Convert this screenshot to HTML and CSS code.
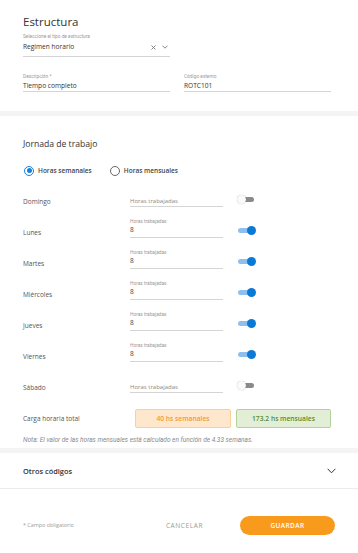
FILE: index.html
```html
<!DOCTYPE html>
<html lang="es">
<head>
    <meta charset="UTF-8">
    <meta name="viewport" content="width=device-width, initial-scale=1.0">
    <title>Estructura</title>
    <link rel="stylesheet" href="styles.css">
</head>
<body>

<div class="section estructura">
    <h1 class="title">Estructura</h1>

    <div class="field select-field">
        <span class="field-label">Seleccione el tipo de estructura</span>
        <div class="field-value select-value">
            <span>Regimen horario</span>
            <span class="select-icons">
                <svg width="5" height="5" viewBox="0 0 5 5"><path d="M0.5 0.5L4.5 4.5M4.5 0.5L0.5 4.5" stroke="#777" stroke-width="0.9" fill="none"/></svg>
                <svg width="6" height="4" viewBox="0 0 6 4"><path d="M0.5 0.7L3 3.2L5.5 0.7" stroke="#777" stroke-width="0.9" fill="none"/></svg>
            </span>
        </div>
    </div>

    <div class="field-row">
        <div class="field">
            <span class="field-label">Descripción *</span>
            <div class="field-value">Tiempo completo</div>
        </div>
        <div class="field">
            <span class="field-label">Código externo</span>
            <div class="field-value">ROTC101</div>
        </div>
    </div>
</div>

<div class="band"></div>

<div class="section jornada">
    <h2 class="subtitle">Jornada de trabajo</h2>

    <div class="radios">
        <label class="radio checked"><span class="radio-circle"></span>Horas semanales</label>
        <label class="radio"><span class="radio-circle"></span>Horas mensuales</label>
    </div>

    <div class="day-list">
        <div class="day-row">
            <span class="day-name">Domingo</span>
            <div class="field hours is-empty">
                <span class="field-label"></span>
                <div class="field-value">Horas trabajadas</div>
            </div>
            <span class="toggle"></span>
        </div>
        <div class="day-row">
            <span class="day-name">Lunes</span>
            <div class="field hours">
                <span class="field-label">Horas trabajadas</span>
                <div class="field-value">8</div>
            </div>
            <span class="toggle on"></span>
        </div>
        <div class="day-row">
            <span class="day-name">Martes</span>
            <div class="field hours">
                <span class="field-label">Horas trabajadas</span>
                <div class="field-value">8</div>
            </div>
            <span class="toggle on"></span>
        </div>
        <div class="day-row">
            <span class="day-name">Miércoles</span>
            <div class="field hours">
                <span class="field-label">Horas trabajadas</span>
                <div class="field-value">8</div>
            </div>
            <span class="toggle on"></span>
        </div>
        <div class="day-row">
            <span class="day-name">Jueves</span>
            <div class="field hours">
                <span class="field-label">Horas trabajadas</span>
                <div class="field-value">8</div>
            </div>
            <span class="toggle on"></span>
        </div>
        <div class="day-row">
            <span class="day-name">Viernes</span>
            <div class="field hours">
                <span class="field-label">Horas trabajadas</span>
                <div class="field-value">8</div>
            </div>
            <span class="toggle on"></span>
        </div>
        <div class="day-row">
            <span class="day-name">Sábado</span>
            <div class="field hours is-empty">
                <span class="field-label"></span>
                <div class="field-value">Horas trabajadas</div>
            </div>
            <span class="toggle"></span>
        </div>
    </div>

    <div class="total-row">
        <span class="day-name">Carga horaria total</span>
        <span class="total-box weekly">40 hs semanales</span>
        <span class="total-box monthly">173.2 hs mensuales</span>
    </div>

    <p class="note">Nota: El valor de las horas mensuales está calculado en función de 4.33 semanas.</p>
</div>

<div class="band"></div>

<div class="accordion">
    <span class="accordion-title">Otros códigos</span>
    <svg width="9" height="6" viewBox="0 0 9 6"><path d="M0.6 0.8L4.5 4.8L8.4 0.8" stroke="#333" stroke-width="1" fill="none"/></svg>
</div>

<div class="footer">
    <span class="required">* Campo obligatorio</span>
    <div class="actions">
        <button class="btn-cancel">CANCELAR</button>
        <button class="btn-save">GUARDAR</button>
    </div>
</div>

</body>
</html>
```

FILE: styles.css
```css
body {
    margin: 0;
    padding: 0;
    background-color: #fff;
    font-family: "Open Sans", "Liberation Sans", sans-serif;
    color: #333;
}
.section {
    padding: 0 27px 0 23px;
}
.estructura {
    padding-top: 14px;
    padding-bottom: 19px;
}
.title {
    margin: 0 0 4px;
    font-size: 11.5px;
    line-height: 16px;
    font-weight: 400;
    color: #333;
}
.field {
    display: flex;
    flex-direction: column;
    border-bottom: 1px solid #d4d4d4;
}
.field-label {
    font-family: Roboto, "Liberation Sans", sans-serif;
    font-size: 4.8px;
    line-height: 6px;
    height: 6px;
    color: #9a9a9a;
}
.field-value {
    font-size: 6.6px;
    line-height: 10px;
    color: #333;
}
.select-field {
    width: 147px;
    padding-bottom: 4px;
}
.select-value {
    margin-top: 2px;
    display: flex;
    justify-content: space-between;
    align-items: center;
}
.select-icons {
    display: flex;
    align-items: center;
    gap: 6px;
    padding-right: 2px;
}
.field-row {
    display: grid;
    grid-template-columns: 147px 147px;
    column-gap: 14px;
    margin-top: 17px;
}
.field-row .field-value {
    margin-top: 1px;
}
.band {
    height: 5px;
    background-color: #f4f4f4;
}
.jornada {
    padding-top: 22px;
    padding-bottom: 3px;
}
.subtitle {
    margin: 0 0 15px;
    font-size: 8.6px;
    line-height: 12px;
    font-weight: 400;
    color: #333;
}
.radios {
    display: flex;
    gap: 18px;
    height: 11px;
    padding-left: 1px;
}
.radio {
    display: flex;
    align-items: center;
    gap: 4px;
    font-size: 6.5px;
    font-weight: 600;
    color: #444;
}
.radio-circle {
    width: 8px;
    height: 8px;
    border: 1px solid #666;
    border-radius: 50%;
    display: flex;
    align-items: center;
    justify-content: center;
}
.radio.checked .radio-circle {
    border-color: #1a7fd8;
}
.radio.checked .radio-circle::after {
    content: "";
    width: 5px;
    height: 5px;
    border-radius: 50%;
    background-color: #1a7fd8;
}
.day-row {
    display: grid;
    grid-template-columns: 107px 93px auto;
    align-items: end;
    height: 31px;
}
.day-name {
    font-size: 6.5px;
    line-height: 10px;
    color: #555;
}
.hours {
    padding-bottom: 2px;
}
.hours .field-value {
    color: #444;
}
.hours.is-empty {
    padding-bottom: 0;
}
.hours.is-empty .field-value {
    padding-top: 2px;
    color: #888;
    font-size: 6px;
}
.toggle {
    width: 19px;
    height: 9px;
    margin: 0 0 3px 14px;
    display: flex;
    align-items: center;
    position: relative;
}
.toggle::before {
    content: "";
    width: 15px;
    height: 5px;
    margin-left: 2px;
    border-radius: 3px;
    background-color: #8a8a8a;
}
.toggle::after {
    content: "";
    position: absolute;
    left: 0;
    top: 0;
    width: 9px;
    height: 9px;
    border-radius: 50%;
    background-color: #fafafa;
    box-shadow: 0 0 1px rgba(0, 0, 0, 0.35);
}
.toggle.on::before {
    margin-left: 1px;
    background-color: #8dbff0;
}
.toggle.on::after {
    left: 10px;
    background-color: #0b7ad6;
    box-shadow: none;
}
.total-row {
    display: grid;
    grid-template-columns: 107px 96px 95px;
    column-gap: 5px;
    align-items: center;
    margin-top: 16px;
}
.total-row .day-name {
    margin-right: -5px;
}
.total-box {
    height: 17px;
    border-radius: 2px;
    display: flex;
    align-items: center;
    justify-content: center;
    font-size: 6.7px;
    font-weight: 600;
}
.weekly {
    background-color: #fee7cd;
    border: 1px solid #fbcf9a;
    color: #f39a36;
}
.monthly {
    background-color: #e2efd6;
    border: 1px solid #b2d398;
    color: #5a8a30;
}
.note {
    margin: 7px 0 0;
    font-family: Roboto, "Liberation Sans", sans-serif;
    font-size: 6.5px;
    line-height: 10px;
    font-style: italic;
    color: #8a8a8a;
}
.accordion {
    height: 35px;
    padding: 0 22px 0 23px;
    display: flex;
    justify-content: space-between;
    align-items: center;
    border-bottom: 1px solid #ececec;
}
.accordion-title {
    font-size: 7.4px;
    font-weight: 600;
    color: #333;
}
.footer {
    height: 72px;
    padding: 0 23px;
    display: flex;
    justify-content: space-between;
    align-items: center;
}
.required {
    font-size: 5.4px;
    color: #9a9a9a;
}
.actions {
    display: flex;
    align-items: center;
    gap: 37px;
}
button {
    font-family: "Open Sans", "Liberation Sans", sans-serif;
    border: none;
    cursor: pointer;
    padding: 0;
}
.btn-cancel {
    background: none;
    font-size: 6.5px;
    letter-spacing: 0.6px;
    color: #9a9a9a;
}
.btn-save {
    width: 95px;
    height: 19px;
    border-radius: 10px;
    background-color: #f89a1c;
    color: #fff;
    font-size: 6.5px;
    font-weight: 600;
    letter-spacing: 0.4px;
}
```
